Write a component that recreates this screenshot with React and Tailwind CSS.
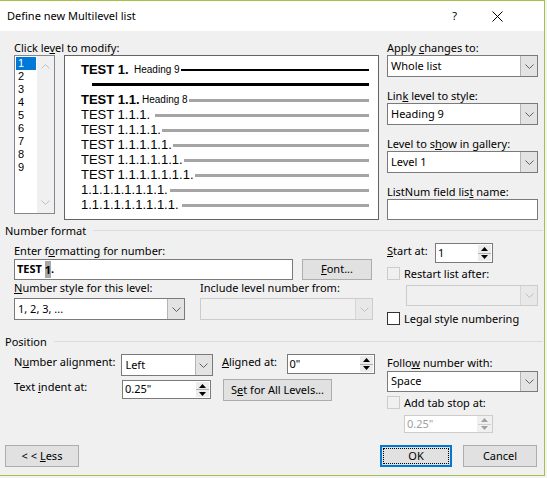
import React from "react";

const UI = "font-['Noto_Sans',sans-serif]";
const ARIAL = "font-['Liberation_Sans',Arial,sans-serif]";

function Chev({ color = "#606060" }) {
  return (
    <svg width="9" height="5" viewBox="0 0 9 5">
      <path d="M0.5 0.5 L4.5 4.5 L8.5 0.5" fill="none" stroke={color} strokeWidth="1" />
    </svg>
  );
}

function ChevUp({ color = "#c0c0c0" }) {
  return (
    <svg width="9" height="5" viewBox="0 0 9 5">
      <path d="M0.5 4.5 L4.5 0.5 L8.5 4.5" fill="none" stroke={color} strokeWidth="1" />
    </svg>
  );
}

function Select({ text, className = "", disabled = false }) {
  return (
    <div
      className={
        "flex border " +
        (disabled ? "border-[#cccccc] bg-[#f0f0f0] " : "border-[#7a7a7a] bg-white ") +
        className
      }
    >
      <div className="flex-1 pl-[3px] flex items-center text-[11px] text-black whitespace-nowrap">{text}</div>
      <div
        className={
          "w-[17px] flex items-center justify-center border-l " +
          (disabled ? "bg-[#e8e8e8] border-[#d6d6d6]" : "bg-[#e3e3e3] border-[#b4b4b4]")
        }
      >
        <Chev color={disabled ? "#c0c0c0" : "#606060"} />
      </div>
    </div>
  );
}

function Tri({ up, color }) {
  return (
    <svg width="7" height="4" viewBox="0 0 7 4">
      {up ? <path d="M0 4 L3.5 0 L7 4 Z" fill={color} /> : <path d="M0 0 L3.5 4 L7 0 Z" fill={color} />}
    </svg>
  );
}

function Spin({ text, className = "", disabled = false }) {
  return (
    <div
      className={
        "flex border " +
        (disabled ? "border-[#cccccc] bg-[#f0f0f0] " : "border-[#7a7a7a] bg-white ") +
        className
      }
    >
      <div
        className={
          "flex-1 pl-[2px] flex items-center text-[11px] whitespace-nowrap " +
          (disabled ? "text-[#a0a0a0] bg-white" : "text-black")
        }
      >
        {text}
      </div>
      <div className="w-[15px] flex flex-col p-[1px]">
        <div
          className={
            "flex-1 flex items-center justify-center border-b " +
            (disabled ? "bg-[#f0f0f0] border-[#d0d0d0]" : "bg-[#ececec] border-[#b0b0b0]")
          }
        >
          <Tri up color={disabled ? "#a0a0a0" : "#000000"} />
        </div>
        <div className={"flex-1 flex items-center justify-center " + (disabled ? "bg-[#f0f0f0]" : "bg-[#ececec]")}>
          <Tri color={disabled ? "#a0a0a0" : "#000000"} />
        </div>
      </div>
    </div>
  );
}

function Btn({ children, className = "" }) {
  return (
    <div
      className={
        "flex items-center justify-center border border-[#adadad] bg-[#e1e1e1] text-[11px] text-black " + className
      }
    >
      {children}
    </div>
  );
}

function Check({ disabled = false }) {
  return (
    <div
      className={
        "w-[13px] h-[13px] border " + (disabled ? "border-[#cccccc] bg-[#f0f0f0]" : "border-[#333333] bg-white")
      }
    />
  );
}

function Label({ children, className = "" }) {
  return <div className={"text-[11px] leading-[15px] text-black whitespace-nowrap " + className}>{children}</div>;
}

function PreviewRow({ text, w, bold = false }) {
  return (
    <div className="flex items-center h-[15px]">
      <div className={"shrink-0 text-[13px] leading-[15px] text-black whitespace-nowrap " + (bold ? "font-bold" : "")} style={{ width: w }}>
        {text}
      </div>
      <div className="flex-1 h-[3px] bg-[#a5a5a5] mt-[1px]" />
    </div>
  );
}

export default function App() {
  return (
    <div className={"w-[547px] h-[478px] bg-[#f3f3f3] " + UI}>
      <div className="w-[545px] h-[476px] border-t border-r border-b border-[#a3c04a] bg-[#f0f0f0] flex flex-col">
        {/* Title bar */}
        <div className="h-[30px] bg-white flex items-center shrink-0">
          <div className="ml-[7px] text-[11px] text-black">Define new Multilevel list</div>
          <div className="ml-auto mr-[35px] text-[11px] text-black">?</div>
          <svg width="11" height="11" viewBox="0 0 11 11" className="mr-[41px]">
            <path d="M0.5 0.5 L10.5 10.5 M10.5 0.5 L0.5 10.5" stroke="#000" strokeWidth="1" />
          </svg>
        </div>

        {/* Section A */}
        <div className="flex mt-[9px] shrink-0">
          <div className="ml-[14px] w-[365px]">
            <Label>
              Click le<u>v</u>el to modify:
            </Label>
            <div className="flex">
              <div className="w-[41px] h-[159px] border border-[#828790] bg-white flex">
                <div className="w-[22px] pt-[1px]">
                  {["1", "2", "3", "4", "5", "6", "7", "8", "9"].map((n, i) => (
                    <div
                      key={n}
                      className={
                        "ml-[1px] w-[20px] h-[13px] pl-[2px] text-[11px] leading-[13px] " +
                        ARIAL +
                        (i === 0 ? " bg-[#0078d7] text-white" : " text-black")
                      }
                    >
                      {n}
                    </div>
                  ))}
                </div>
                <div className="w-[17px] bg-[#f0f0f0] flex flex-col items-center justify-between py-[8px]">
                  <ChevUp />
                  <Chev color="#c0c0c0" />
                </div>
              </div>
              <div className={"ml-[9px] w-[315px] h-[165px] border border-[#646464] bg-white pl-[16px] pr-[9px] pt-[6px] " + ARIAL}>
                <div className="flex items-center h-[15px]">
                  <div className="w-[53px] shrink-0 text-[13px] leading-[15px] font-bold text-black whitespace-nowrap">TEST 1.</div>
                  <div className="shrink-0 text-[10px] leading-[15px] text-black whitespace-nowrap">Heading 9</div>
                  <div className="flex-1 h-[2px] bg-black mt-[1px] ml-[1px]" />
                </div>
                <div className="ml-[11px] mt-[6px] h-[3px] bg-black" />
                <div className="flex items-center h-[15px] mt-[6px]">
                  <div className="w-[61px] shrink-0 text-[13px] leading-[15px] font-bold text-black whitespace-nowrap">TEST 1.1.</div>
                  <div className="shrink-0 text-[10px] leading-[15px] text-black whitespace-nowrap">Heading 8</div>
                  <div className="flex-1 h-[3px] bg-[#a5a5a5] mt-[1px] ml-[1px]" />
                </div>
                <PreviewRow text="TEST 1.1.1." w={74} />
                <PreviewRow text="TEST 1.1.1.1." w={81} />
                <PreviewRow text="TEST 1.1.1.1.1." w={92} />
                <PreviewRow text="TEST 1.1.1.1.1.1." w={103} />
                <PreviewRow text="TEST 1.1.1.1.1.1.1." w={114} />
                <PreviewRow text="1.1.1.1.1.1.1.1." w={89} />
                <PreviewRow text="1.1.1.1.1.1.1.1.1." w={101} />
              </div>
            </div>
          </div>
          <div className="ml-[8px] w-[151px]">
            <Label>
              Apply <u>c</u>hanges to:
            </Label>
            <Select text="Whole list" className="h-[22px]" />
            <Label className="mt-[11px]">
              Lin<u>k</u> level to style:
            </Label>
            <Select text="Heading 9" className="h-[22px]" />
            <Label className="mt-[11px]">
              Level to s<u>h</u>ow in gallery:
            </Label>
            <Select text="Level 1" className="h-[22px]" />
            <Label className="mt-[11px]">
              ListNum field lis<u>t</u> name:
            </Label>
            <div className="h-[21px] border border-[#7a7a7a] bg-white" />
          </div>
        </div>

        {/* Number format header */}
        <div className="flex items-center mt-[3px] ml-[5px] mr-[1px] shrink-0">
          <Label>Number format</Label>
          <div className="flex-1 h-px bg-[#dcdcdc] ml-[7px]" />
        </div>

        {/* Section B */}
        <div className="flex items-start shrink-0">
          <div className="ml-[14px] w-[361px] mt-[5px]">
            <Label>
              Enter f<u>o</u>rmatting for number:
            </Label>
            <div className="flex mt-[1px]">
              <div className="w-[279px] h-[21px] border border-[#7a7a7a] bg-white flex items-center pl-[2px] text-[11px] font-bold text-black">
                TEST&nbsp;<span className="bg-[#a8a8a8] leading-[17px]">1</span>.
              </div>
              <Btn className="ml-[9px] w-[70px] h-[21px]">
                <span>
                  <u>F</u>ont...
                </span>
              </Btn>
            </div>
            <div className="flex">
              <div className="w-[171px]">
                <Label>
                  <u>N</u>umber style for this level:
                </Label>
                <Select text="1, 2, 3, ..." className="h-[22px] mt-[3px]" />
              </div>
              <div className="ml-[15px] w-[173px]">
                <Label className="text-[#a0a0a0]">Include level number from:</Label>
                <Select text="" disabled className="h-[22px] mt-[3px]" />
              </div>
            </div>
          </div>
          <div className="ml-[12px] w-[151px] mt-[5px]">
            <div className="flex items-start h-[20px]">
              <Label className="w-[48px]">
                <u>S</u>tart at:
              </Label>
              <Spin text="1" className="w-[58px] h-[20px]" />
            </div>
            <div className="flex items-center mt-[4px] h-[13px]">
              <Check disabled />
              <Label className="ml-[4px] text-[#a0a0a0]">Restart list after:</Label>
            </div>
            <Select text="" disabled className="ml-[19px] w-[132px] h-[21px] mt-[5px]" />
            <div className="flex items-center mt-[6px] h-[13px]">
              <Check />
              <Label className="ml-[4px]">
                Le<u>g</u>al style numbering
              </Label>
            </div>
          </div>
        </div>

        {/* Position header */}
        <div className="flex items-center mt-[9px] ml-[5px] mr-[1px] shrink-0">
          <Label>Position</Label>
          <div className="flex-1 h-px bg-[#dcdcdc] ml-[7px]" />
        </div>

        {/* Section C */}
        <div className="flex items-start shrink-0">
          <div className="ml-[14px] w-[361px] mt-[5px]">
            <div className="flex items-start">
              <Label className="w-[108px]">
                N<u>u</u>mber alignment:
              </Label>
              <Select text="Left" className="w-[92px] h-[22px]" />
              <Label className="ml-[9px] w-[65px]">
                <u>A</u>ligned at:
              </Label>
              <Spin text={'0"'} className="w-[89px] h-[20px]" />
            </div>
            <div className="flex items-start mt-[3px]">
              <Label className="w-[108px]">
                Text <u>i</u>ndent at:
              </Label>
              <Spin text={'0.25"'} className="w-[89px] h-[19px] mt-[1px]" />
              <Btn className="ml-[12px] w-[109px] h-[22px]">
                <span>
                  S<u>e</u>t for All Levels...
                </span>
              </Btn>
            </div>
          </div>
          <div className="ml-[12px] w-[151px] mt-[6px]">
            <Label>
              Follo<u>w</u> number with:
            </Label>
            <Select text="Space" className="h-[21px] mt-[1px]" />
            <div className="flex items-center mt-[4px] h-[13px]">
              <Check disabled />
              <Label className="ml-[4px] text-[#a0a0a0]">Add tab stop at:</Label>
            </div>
            <Spin text={'0.25"'} disabled className="ml-[17px] w-[89px] h-[18px] mt-[6px]" />
          </div>
        </div>

        {/* Buttons */}
        <div className="flex mt-[12px] shrink-0">
          <Btn className="ml-[5px] w-[74px] h-[22px]">
            <span>
              &lt; &lt; <u>L</u>ess
            </span>
          </Btn>
          <div className="ml-[301px] w-[72px] h-[22px] border-2 border-[#0078d7] bg-[#e1e1e1] p-[1px]">
            <div className="w-full h-full border border-dotted border-black flex items-center justify-center text-[11px] text-black">
              OK
            </div>
          </div>
          <Btn className="ml-[11px] w-[74px] h-[22px]">Cancel</Btn>
        </div>
      </div>
    </div>
  );
}
